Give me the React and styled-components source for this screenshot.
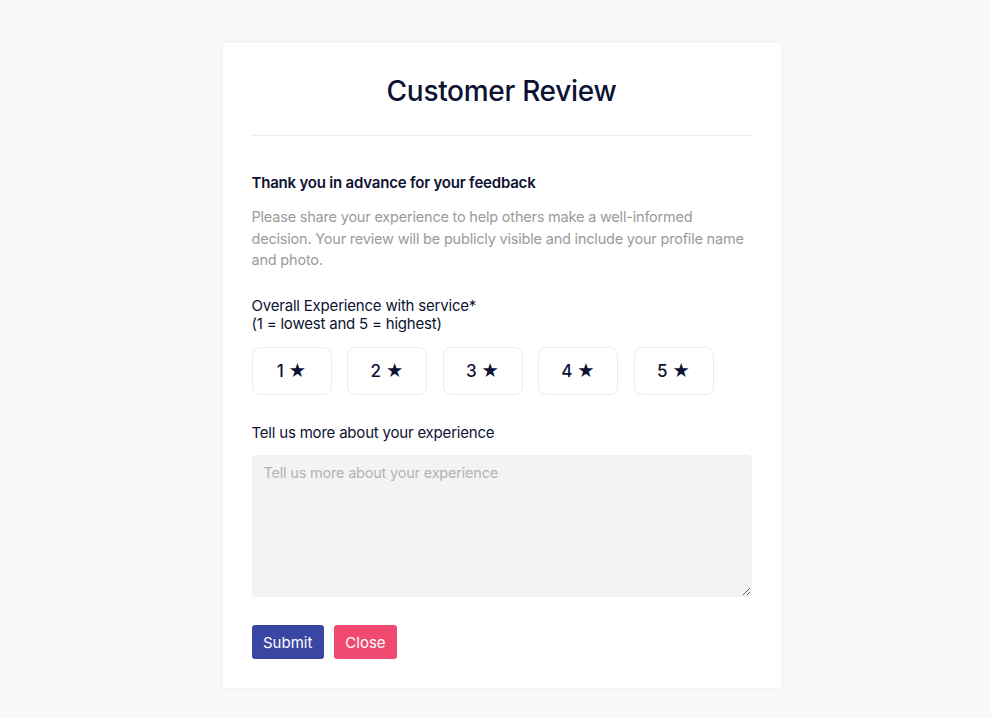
import React from 'react';
import styled, { createGlobalStyle } from 'styled-components';

const ratings = [1, 2, 3, 4, 5];

export default function App() {
  return (
    <>
      <GlobalStyle />
      <SPage>
        <SCard>
          <STitle>Customer Review</STitle>
          <SDivider />
          <SIntro>Thank you in advance for your feedback</SIntro>
          <SText>
            Please share your experience to help others make a well-informed
            decision. Your review will be publicly visible and include your profile
            name and photo.
          </SText>
          <SLabel>
            Overall Experience with service*
            <br />
            (1 = lowest and 5 = highest)
          </SLabel>
          <SRatings>
            {ratings.map((n) => (
              <SRating key={n} type="button">
                {n} ★
              </SRating>
            ))}
          </SRatings>
          <SLabel>Tell us more about your experience</SLabel>
          <STextarea placeholder="Tell us more about your experience" />
          <SActions>
            <SButton type="button" $variant="primary">Submit</SButton>
            <SButton type="button" $variant="danger">Close</SButton>
          </SActions>
        </SCard>
      </SPage>
    </>
  );
}

// STYLES
const GlobalStyle = createGlobalStyle`
  body {
    margin: 0;
    background: #f9f9f9;
    font-family: Inter, "Noto Sans", sans-serif;
    color: #0d1232;
  }
`;

const SPage = styled.div`
  display: flex;
  justify-content: center;
  padding: 43px 0 30px 12px;
  min-height: 100vh;
  box-sizing: border-box;
`;

const SCard = styled.div`
  width: 558px;
  box-sizing: border-box;
  background: #ffffff;
  padding: 30px 29px 25px;
  box-shadow: 0 0 6px rgba(0, 0, 0, 0.05);
  display: flex;
  flex-direction: column;
`;

const STitle = styled.h1`
  margin: 0;
  text-align: center;
  font-size: 28px;
  font-weight: 500;
  line-height: 36px;
  letter-spacing: -0.3px;
  color: #0d1232;
`;

const SDivider = styled.hr`
  border: none;
  border-top: 1px solid #ececec;
  margin: 26px 0 36px;
`;

const SIntro = styled.h3`
  margin: 0 0 12px;
  font-size: 15px;
  font-weight: 600;
  line-height: 22px;
  letter-spacing: -0.2px;
`;

const SText = styled.p`
  margin: 0 0 26px;
  font-size: 14.5px;
  line-height: 21.5px;
  color: #9a9a9a;
  letter-spacing: -0.2px;
`;

const SLabel = styled.div`
  font-size: 15px;
  line-height: 18.5px;
  letter-spacing: -0.2px;
  color: #0d1232;
  margin-bottom: 13px;
`;

const SRatings = styled.div`
  display: flex;
  gap: 15.5px;
  margin-bottom: 29px;
`;

const SRating = styled.button`
  width: 80px;
  height: 48px;
  border: 1px solid #ededed;
  border-radius: 8px;
  background: #ffffff;
  font-family: inherit;
  font-size: 17px;
  font-weight: 500;
  color: #0d1232;
  cursor: pointer;
`;

const STextarea = styled.textarea`
  height: 142px;
  box-sizing: border-box;
  resize: vertical;
  background: #f3f3f3;
  border: 1px solid #efefef;
  border-radius: 4px;
  padding: 8px 11px;
  font-family: inherit;
  font-size: 14.5px;
  letter-spacing: -0.2px;
  margin: 0 0 28px;
  outline: none;

  &::placeholder {
    color: #b3b3b3;
  }
`;

const SActions = styled.div`
  display: flex;
  gap: 10px;
`;

const SButton = styled.button`
  height: 34px;
  padding: 0 11.5px;
  border: none;
  border-radius: 3px;
  font-family: inherit;
  font-size: 15px;
  color: #ffffff;
  cursor: pointer;
  background: ${(p) => (p.$variant === 'primary' ? '#3947a2' : '#f04a71')};
`;
